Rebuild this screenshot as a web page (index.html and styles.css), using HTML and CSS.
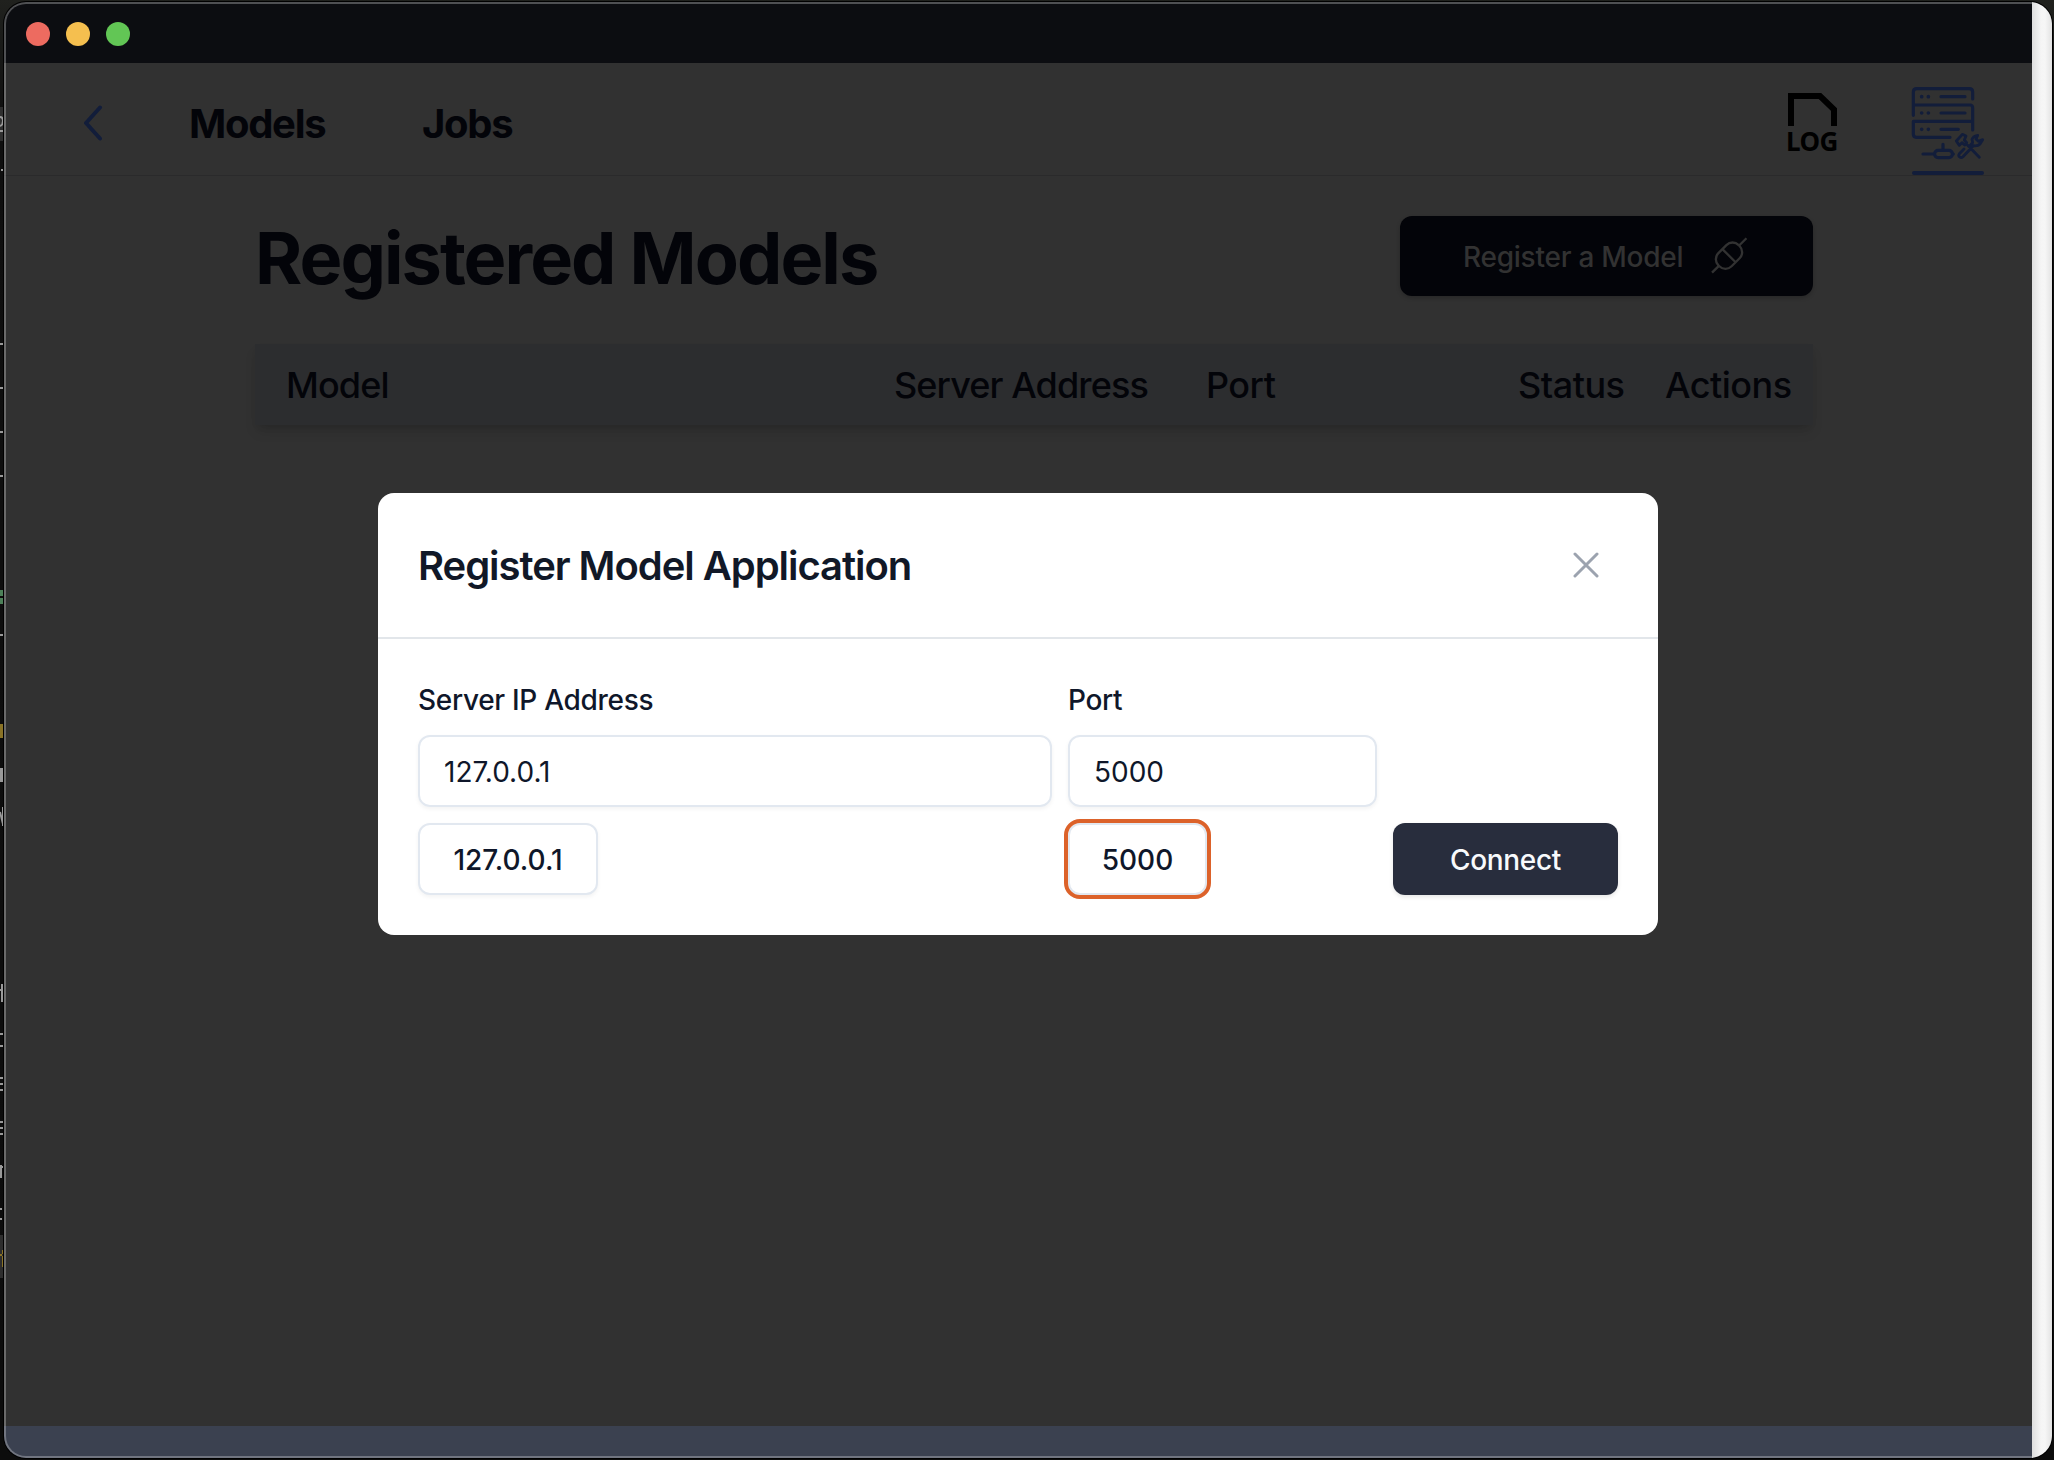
FILE: index.html
```html
<!DOCTYPE html>
<html lang="en">
<head>
<meta charset="utf-8">
<title>Registered Models</title>
<link rel="stylesheet" href="styles.css">
</head>
<body>
<div class="desktop">
  <svg class="editor-edge" width="4" height="1460" viewBox="0 0 4 1460" aria-hidden="true">
    <path fill="#444" d="M0 107h4v34H0zM0 1235h4v43H0z" opacity=".6"/>
    <path stroke="#999" stroke-width="2" fill="none" d="M0 117q3 0 3 4t-3 5M0 131h3M1 170h2M0 344h3M0 388h3M0 432h3M0 476h3M0 635h3M1 768v14M3 768v14M3 807v19M0 812l3 12M0 990h3M2 984v18M3 1034h-3M3 1046h-3M0 1078h3M0 1084h3M0 1090h3M0 1122h3M0 1128h3M0 1134h3M1 1165v13M1 1167h2M0 1209h2M0 1219h2"/>
    <path fill="#4c8058" d="M0 590h3v6H0zM0 598h3v6H0z"/>
    <path fill="#8a7326" d="M0 724h3v14H0zM0 1254h3v2H0zM1 1250h1v17h2v-2h-1v-15z"/>
  </svg>
  <div class="window">
    <div class="view">
      <header class="titlebar">
        <span class="light light-close"></span>
        <span class="light light-min"></span>
        <span class="light light-max"></span>
      </header>
      <nav class="nav">
        <svg class="back" width="20" height="36" viewBox="0 0 20 36"><path d="M17 2.500 3 18l14 15.500"/></svg>
        <a class="nav-link models">Models</a>
        <a class="nav-link jobs">Jobs</a>
        <div class="tools">
          <div class="log">
            <svg width="49" height="33" viewBox="0 0 49 33"><path d="M3 33V3h29l14 13.500V33"/></svg>
            <span class="log-text">LOG</span>
          </div>
          <div class="server">
            <svg width="76" height="76" viewBox="510 255 228 228">
              <path d="M520 346v-70q0-10 10-10h158q10 0 10 10v21M520 315h170q8 0 8 9v66M698 364H520v39q0 9 9 9h101M603 290h72M603 339h72M603 388h52M549 462h34M609 433v17M638 462h2"/>
              <rect x="584" y="451" width="53" height="22" rx="10"/>
              <path d="M545 290h.1M565 290h.1M545 339h.1M565 339h.1M545 388h.1M565 388h.1" stroke-width="11"/>
              <path stroke-width="8.500" d="M649 423l18-20 11 5-5 12 7 8-6 7-8-7-8 8zM683 436l35 36M672 447l-14 14q-4 6 1 10 5 4 10-1l31-33q14 2 20-5l8-13-13 5-7-7 5-11q-14 3-17 12l2 10-9 10"/>
            </svg>
            <span class="underline"></span>
          </div>
        </div>
      </nav>
      <main class="content">
        <div class="heading">
          <h1>Registered Models</h1>
          <button class="register"><span class="register-text">Register a Model</span>
            <svg width="38" height="38" viewBox="990 141 114 114"><g transform="rotate(-45 1047 197)"><rect x="1004" y="169" width="86" height="56" rx="26"/><path d="M1047 169v56M975 197h29M1090 197h31"/></g></svg>
          </button>
        </div>
        <div class="thead">
          <span class="th">Model</span><span class="th">Server Address</span><span class="th">Port</span><span class="th">Status</span><span class="th">Actions</span>
        </div>
      </main>
      <footer class="footer"></footer>
      <div class="overlay">
        <section class="modal">
          <header class="modal-head">
            <h2>Register Model Application</h2>
            <svg class="close" width="26" height="26" viewBox="0 0 26 26"><path d="M2 2l22 22M24 2 2 24"/></svg>
          </header>
          <div class="form">
            <label class="label">Server IP Address</label>
            <label class="label">Port</label>
            <span></span>
            <div class="field">127.0.0.1</div>
            <div class="field field-port">5000</div>
            <span></span>
            <button class="chip chip-ip">127.0.0.1</button>
            <button class="chip chip-port">5000</button>
            <button class="connect">Connect</button>
          </div>
        </section>
      </div>
    </div>
    <div class="gutter"></div>
  </div>
</div>
</body>
</html>
```
FILE: styles.css
```css
* { box-sizing: border-box; }
body { margin: 0; font-family: Inter, "Liberation Sans", sans-serif; color: #030409; }
button { font-family: inherit; margin: 0; padding: 0; border: 0; }
h1, h2 { margin: 0; }
svg { fill: none; flex: none; display: block; }

.desktop { position: relative; width: 2054px; height: 1460px; padding: 2px 2px 2px 4px; background: linear-gradient(#20211e, #0f0f0f 8%, #0c0c0c); overflow: hidden; }
.editor-edge { position: absolute; left: 0; top: 0; }
.window { position: relative; display: flex; height: 1456px; border-radius: 22px; overflow: hidden; background: #313131; box-shadow: 0 0 0 1px #000; }
.window::after { content: ""; position: absolute; inset: 0 20px 0 0; border: 2px solid rgba(255, 255, 255, .28); border-right: 0; border-radius: 22px 0 0 22px; pointer-events: none; }
.view { position: relative; display: flex; flex-direction: column; width: 2028px; }
.gutter { flex: 1; background: linear-gradient(90deg, #dedede, #f5f5f5 45%, #f6f6f6 65%, #e2e2e2); border-radius: 0 22px 22px 0; }

.titlebar { display: flex; align-items: center; gap: 16px; height: 61px; padding: 0 0 0 22px; background: #0c0d11; }
.light { width: 24px; height: 24px; border-radius: 50%; margin-top: 3px; }
.light-close { background: #ed6b60; }
.light-min { background: #f5bf4f; }
.light-max { background: #62c655; }

.nav { display: flex; align-items: center; height: 113px; padding-left: 79px; border-bottom: 1px solid #2a2a2b; }
.back { stroke: #121d3a; stroke-width: 4; stroke-linecap: round; stroke-linejoin: round; margin-top: 7px; }
.nav-link { font-size: 40px; font-weight: 700; line-height: 56px; letter-spacing: -1.3px; margin-top: 9px; }
.models { width: 233px; margin-left: 86px; }
.tools { display: flex; margin-left: auto; align-self: stretch; padding-right: 46px; }
.log { width: 49px; margin: 30px 73px 0 0; }
.log svg { stroke: #000; stroke-width: 6; }
.log-text { display: block; font: 700 26px/26px "Noto Sans", sans-serif; letter-spacing: -.6px; color: #000; margin: 2px 0 0 -2px; white-space: nowrap; }
.server { width: 76px; padding-top: 22px; }
.server svg { stroke: #121d3a; stroke-width: 9.5; stroke-linecap: round; stroke-linejoin: round; }
.underline { display: block; width: 72px; height: 4px; margin: 10px 0 0 2px; border-radius: 2px; background: #121d3a; }

.content { width: 1558px; margin: 40px 0 0 251px; flex: 1; }
.heading { display: flex; justify-content: space-between; align-items: center; height: 80px; }
h1 { font-size: 72px; font-weight: 700; line-height: 80px; letter-spacing: -1.95px; padding-top: 3px; }
.register { display: flex; align-items: center; width: 413px; height: 80px; padding-left: 63px; border-radius: 12px; background: #030409; color: #323232; font-size: 28px; font-weight: 500; box-shadow: 0 2px 4px rgba(0, 0, 0, .2); }
.register-text { width: 247px; white-space: nowrap; text-align: left; letter-spacing: -.25px; padding-top: 1px; }
.register svg { stroke: #323232; stroke-width: 7; }
.thead { display: grid; grid-template-columns: 608px 312px 312px 147px 1fr; align-items: center; height: 81px; margin-top: 48px; padding-left: 31px; background: #2c2d2f; box-shadow: 0 8px 12px -2px rgba(0, 0, 0, .12), 0 4px 8px -4px rgba(0, 0, 0, .12); font-size: 36px; font-weight: 500; letter-spacing: -.9px; }
.th { white-space: nowrap; }
.th:nth-child(n+3) { letter-spacing: -.5px; }
.footer { height: 32px; background: #3b4150; }

.overlay { position: absolute; inset: 0; display: flex; justify-content: center; align-items: flex-start; padding-top: 491px; }
.modal { width: 1280px; height: 442px; border-radius: 16px; background: #fff; color: #111827; }
.modal-head { display: flex; align-items: center; justify-content: space-between; height: 146px; padding: 0 59px 0 40px; border-bottom: 2px solid #e2e6ea; }
h2 { font-size: 40px; font-weight: 600; line-height: 56px; letter-spacing: -1.05px; padding-top: 2px; }
.close { stroke: #9ca3af; stroke-width: 3; stroke-linecap: round; }
.form { display: grid; grid-template-columns: 634px 309px 225px; grid-template-rows: 40px 72px 72px; gap: 16px; padding: 40px 40px 0; color: #0f172a; font-size: 28px; }
.label { font-weight: 500; line-height: 42px; letter-spacing: -.3px; }
.field { border: 2px solid #e2e8f0; border-radius: 12px; padding-left: 24px; line-height: 70px; height: 72px; box-shadow: 0 2px 4px rgba(0, 0, 0, .05); }
.chip { height: 72px; border: 2px solid #e2e8f0; border-radius: 12px; background: #fff; color: #0f172a; font-size: 28px; font-weight: 500; padding-top: 1px; box-shadow: 0 2px 4px rgba(0, 0, 0, .05); }
.chip-ip { width: 180px; }
.chip-port { width: 139px; outline: 4px solid #dc622a; }
.connect { border-radius: 12px; background: #282d3d; color: #f8fafc; font-size: 28px; font-weight: 500; letter-spacing: -.3px; padding-top: 1px; box-shadow: 0 2px 4px rgba(0, 0, 0, .1); }
```
